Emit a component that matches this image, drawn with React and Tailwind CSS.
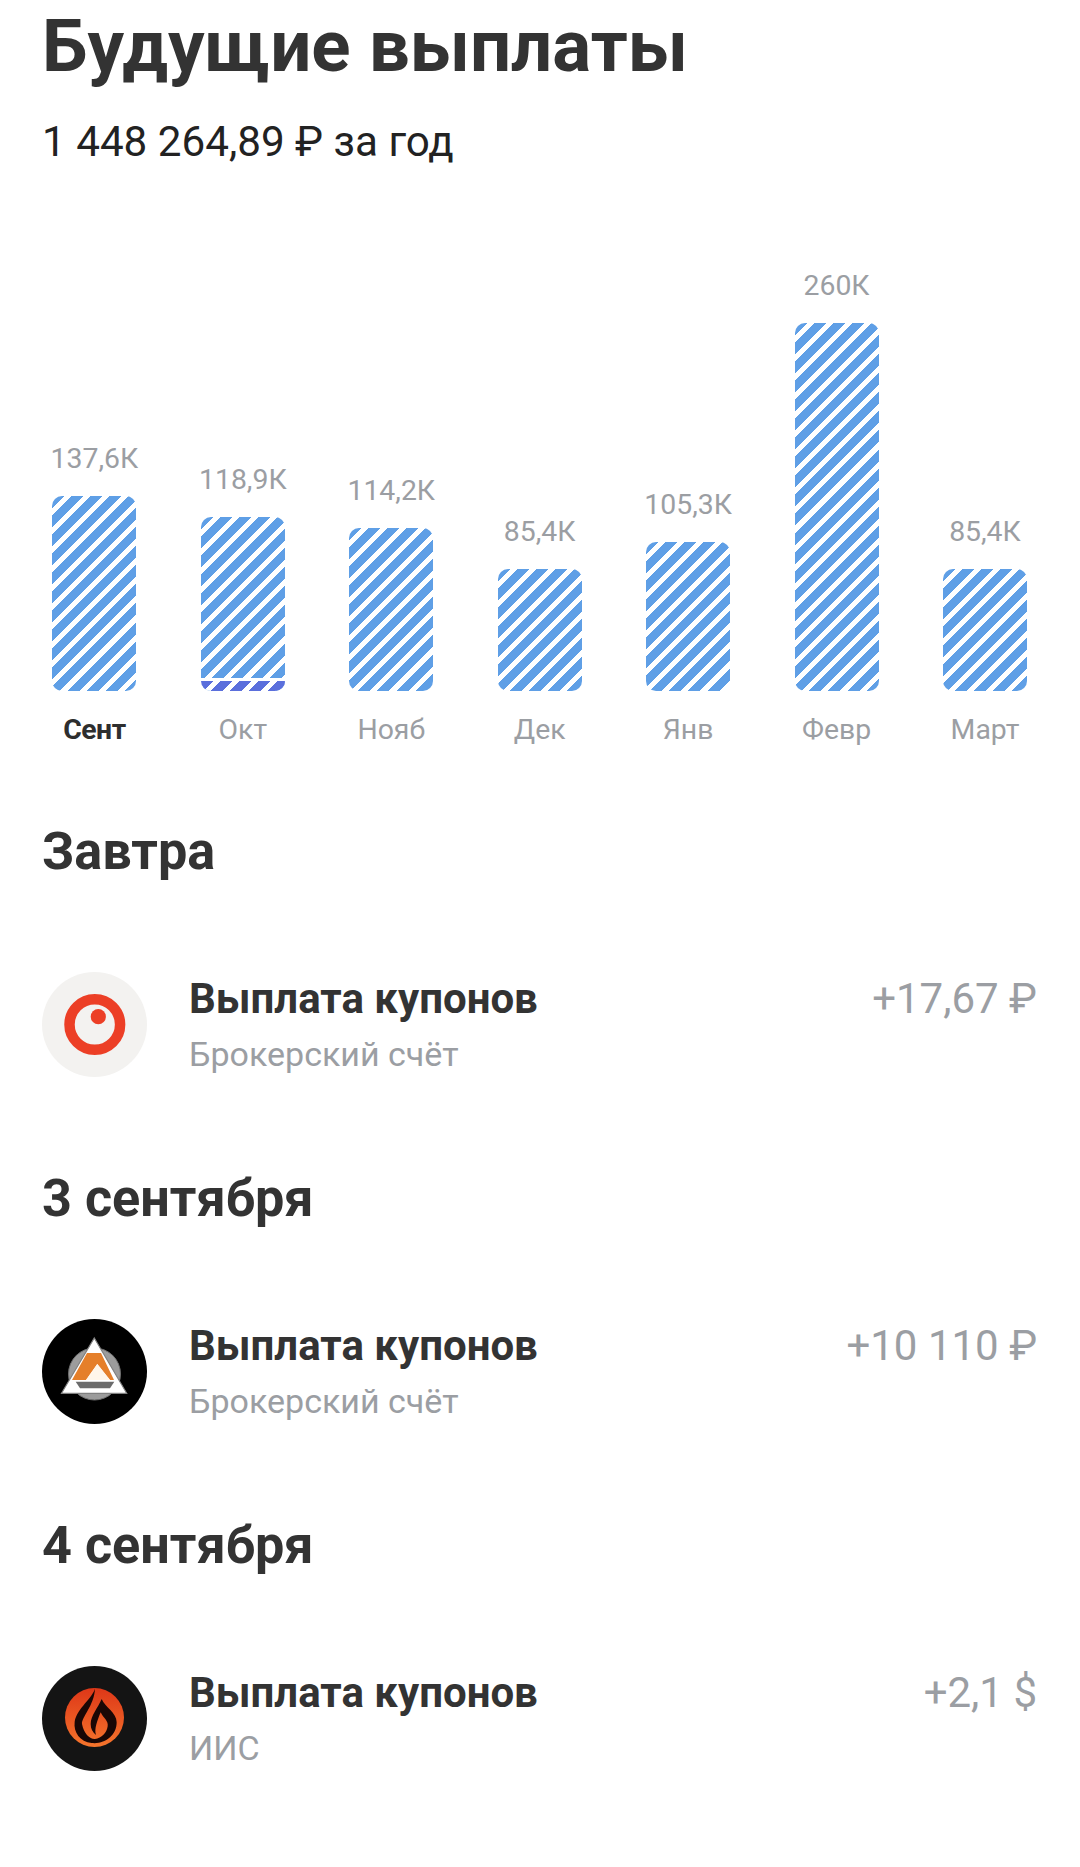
const months = [
  { label: 'Сент', value: '137,6К', height: 'h-[195px]', active: true },
  { label: 'Окт', value: '118,9К', height: 'h-[174px]', part: true },
  { label: 'Нояб', value: '114,2К', height: 'h-[163px]' },
  { label: 'Дек', value: '85,4К', height: 'h-[122px]' },
  { label: 'Янв', value: '105,3К', height: 'h-[149px]' },
  { label: 'Февр', value: '260К', height: 'h-[368px]' },
  { label: 'Март', value: '85,4К', height: 'h-[122px]' },
];

function Bar({ month }) {
  return (
    <div className="flex flex-col items-center">
      <div className="text-[28.4px] leading-[34px] text-[#9b9ea3] mb-[20px]">{month.value}</div>
      <div className={'w-[84px] rounded-[10px] overflow-hidden flex flex-col justify-end bg-[repeating-linear-gradient(135deg,#5f9fe6_0,#5f9fe6_8.5px,#ffffff_8.5px,#ffffff_13.5px)] ' + month.height}>
        {month.part && (
          <div className="h-[13px] border-t-[3px] border-white bg-[repeating-linear-gradient(135deg,#5b6fdc_0,#5b6fdc_8.5px,#ffffff_8.5px,#ffffff_13.5px)]" />
        )}
      </div>
      <div className={'mt-[22px] text-[28.4px] leading-[34px] ' + (month.active ? 'font-bold text-[#2e2e2e] tracking-[-0.5px]' : 'text-[#9b9ea3]')}>
        {month.label}
      </div>
    </div>
  );
}

function TargetLogo() {
  return (
    <svg viewBox="0 0 105 105" className="w-[105px] h-[105px] shrink-0">
      <circle cx="52.5" cy="52.5" r="52.5" fill="#f3f2f0" />
      <circle cx="52.8" cy="52.5" r="25.3" fill="none" stroke="#ec3f26" strokeWidth="10.5" />
      <circle cx="56.3" cy="44.7" r="7.6" fill="#ec3f26" />
    </svg>
  );
}

function TriangleLogo() {
  return (
    <svg viewBox="0 0 105 105" className="w-[105px] h-[105px] shrink-0">
      <circle cx="52.5" cy="52.5" r="52.5" fill="#000000" />
      <circle cx="52.5" cy="55" r="26" fill="#9c9c9c" stroke="#6f6f6f" strokeWidth="1" />
      <path d="M52.3 19 L84.7 74.3 L19.5 74.3 Z" fill="#ffffff" stroke="#808080" strokeWidth="1.2" />
      <path d="M45 34 H59 L72 61 H68 L55.3 45 L44 61 H30 Z" fill="#e57f2a" />
      <path d="M44 61 L55.3 45 L68 61 Z" fill="#fff6ea" />
      <path d="M33.7 62.7 H72.3 L68 69.3 H38 Z" fill="#6b6b6b" />
    </svg>
  );
}

function FlameLogo() {
  return (
    <svg viewBox="0 0 105 105" className="w-[105px] h-[105px] shrink-0">
      <defs>
        <linearGradient id="flame" x1="0" y1="0" x2="0" y2="1">
          <stop offset="0" stopColor="#dd3718" />
          <stop offset="1" stopColor="#f6752c" />
        </linearGradient>
      </defs>
      <circle cx="52.5" cy="52.5" r="52.5" fill="#141414" />
      <circle cx="52.5" cy="51.5" r="29.5" fill="url(#flame)" />
      <g transform="translate(18 13) scale(0.3333)">
        <path
          d="M105 28 C100 55 50 90 44 128 C40 160 60 188 95 192 C135 196 170 170 170 130 C170 100 135 85 125 60 C115 85 92 110 92 135 C92 150 98 160 108 168 C102 150 112 125 122 100 C130 118 146 125 143 142 C140 162 125 178 105 180 C90 181 72 165 66 135 C64 115 103 80 105 28 Z"
          fill="#1a0705"
        />
      </g>
    </svg>
  );
}

function Payment({ date, logo, account, amount }) {
  return (
    <section>
      <h2 className="text-[52.2px] leading-[52px] font-bold text-[#333333]">{date}</h2>
      <div className="mt-[94px] flex items-start h-[105px] mb-[96px]">
        {logo}
        <div className="ml-[42px] flex-1">
          <div className="text-[42px] leading-[48px] font-bold text-[#333333] mt-[3px]">Выплата купонов</div>
          <div className="text-[34px] leading-[40px] text-[#9b9ea3] mt-[11px]">{account}</div>
        </div>
        <div className="text-[42px] leading-[48px] text-[#9b9ea3] mt-[3px]">{amount}</div>
      </div>
    </section>
  );
}

export default function App() {
  return (
    <div className="w-[1080px] h-[1867px] bg-white overflow-hidden font-['Roboto',sans-serif]">
      <div className="px-[42px]">
        <h1 className="text-[72.7px] leading-[76px] font-bold text-[#333333] mt-[9px]">Будущие выплаты</h1>
        <div className="text-[42.2px] leading-[48px] text-[#222222] mt-[33px]">1 448 264,89 ₽ за год</div>
      </div>
      <div className="mt-[102px] pl-[20.2px] pr-[20.8px] grid grid-cols-7 items-end h-[479px]">
        {months.map((m) => <Bar key={m.label} month={m} />)}
      </div>
      <div className="pl-[42px] pr-[43px] mt-[79px]">
        <Payment date="Завтра" logo={<TargetLogo />} account="Брокерский счёт" amount="+17,67 ₽" />
        <Payment date="3 сентября" logo={<TriangleLogo />} account="Брокерский счёт" amount="+10 110 ₽" />
        <Payment date="4 сентября" logo={<FlameLogo />} account="ИИС" amount="+2,1 $" />
      </div>
    </div>
  );
}
